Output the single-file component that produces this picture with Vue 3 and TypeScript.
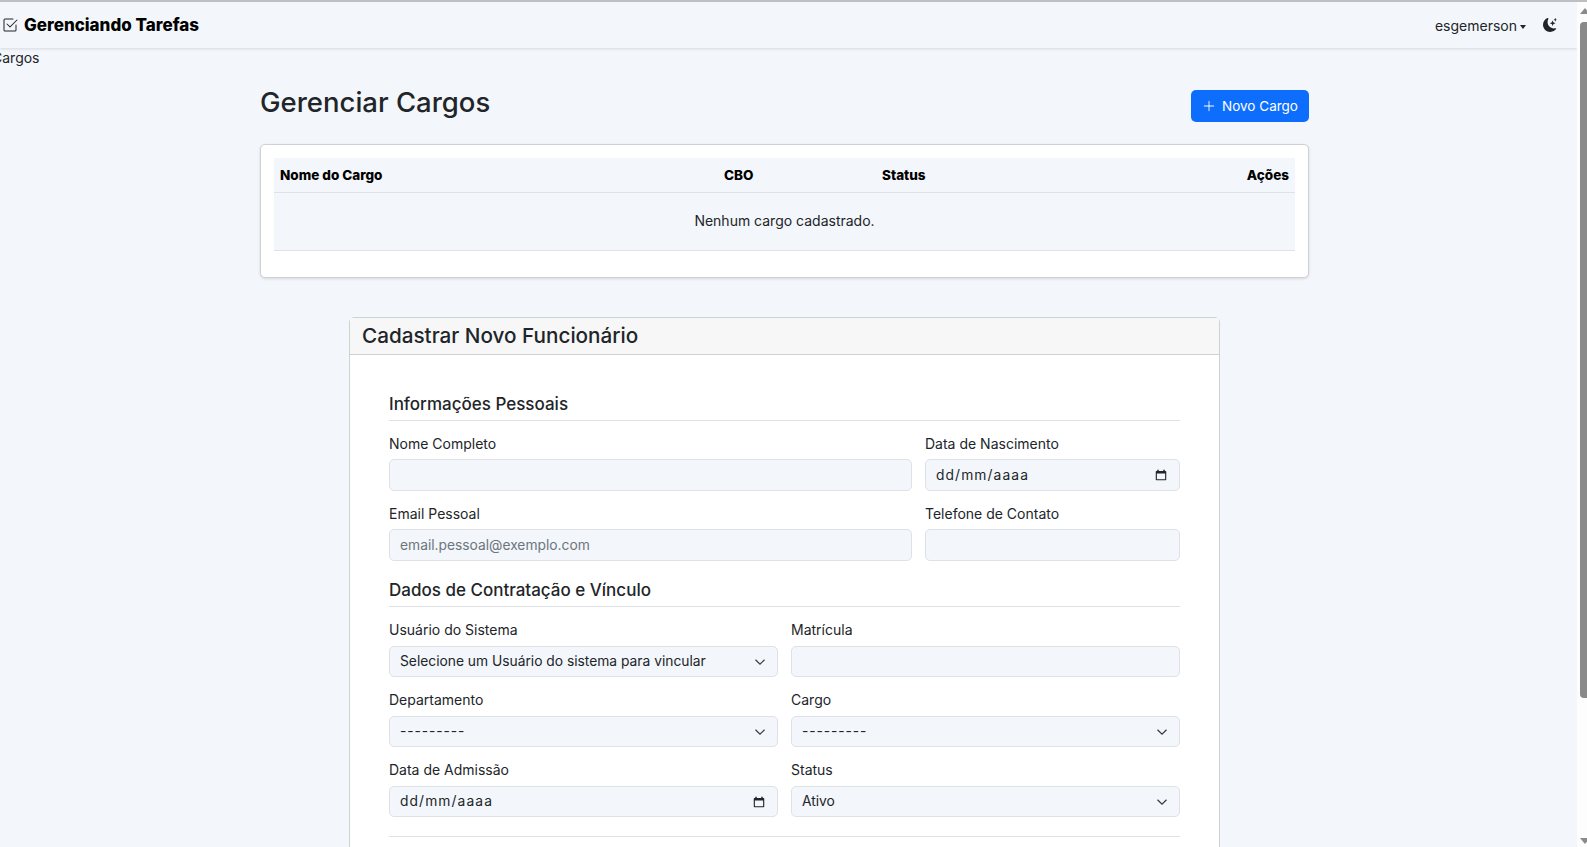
<script setup lang="ts">
import { ref } from 'vue'

const dateMask = ref('dd/mm/aaaa')
</script>

<template>
  <div class="shell">
    <nav class="navbar">
      <div class="brand">
        <svg class="brand_icon" viewBox="0 0 16 16" fill="currentColor">
          <path d="M3 14.500A1.500 1.500 0 0 1 1.500 13V3A1.500 1.500 0 0 1 3 1.500h8a.5.5 0 0 1 0 1H3a.5.5 0 0 0-.5.5v10a.5.5 0 0 0 .5.5h10a.5.5 0 0 0 .5-.5V8a.5.5 0 0 1 1 0v5a1.500 1.500 0 0 1-1.500 1.500H3z" />
          <path d="m8.354 10.354 7-7a.5.5 0 0 0-.708-.708L8 9.293 5.354 6.646a.5.5 0 1 0-.708.708l3 3a.5.5 0 0 0 .708 0z" />
        </svg>
        <span>Gerenciando Tarefas</span>
      </div>
      <div class="nav_right">
        <span class="user">esgemerson<i class="caret"></i></span>
        <svg class="moon" viewBox="0 0 16 16" fill="currentColor">
          <path d="M6 .278a.768.768 0 0 1 .08.858 7.208 7.208 0 0 0-.878 3.46c0 4.021 3.278 7.277 7.318 7.277.527 0 1.04-.055 1.533-.16a.787.787 0 0 1 .81.316.733.733 0 0 1-.031.893A8.349 8.349 0 0 1 8.344 16C3.734 16 0 12.286 0 7.71 0 4.266 2.114 1.312 5.124.06A.752.752 0 0 1 6 .278z" />
          <path d="M10.794 3.148a.217.217 0 0 1 .412 0l.387 1.162c.173.518.579.924 1.097 1.097l1.162.387a.217.217 0 0 1 0 .412l-1.162.387a1.734 1.734 0 0 0-1.097 1.097l-.387 1.162a.217.217 0 0 1-.412 0l-.387-1.162A1.734 1.734 0 0 0 9.31 6.593l-1.162-.387a.217.217 0 0 1 0-.412l1.162-.387a1.734 1.734 0 0 0 1.097-1.097l.387-1.162zM13.863.099a.145.145 0 0 1 .274 0l.258.774c.115.346.386.617.732.732l.774.258a.145.145 0 0 1 0 .274l-.774.258a1.156 1.156 0 0 0-.732.732l-.258.774a.145.145 0 0 1-.274 0l-.258-.774a1.156 1.156 0 0 0-.732-.732l-.774-.258a.145.145 0 0 1 0-.274l.774-.258c.346-.115.617-.386.732-.732L13.863.1z" />
        </svg>
      </div>
    </nav>

    <div class="page_body">
      <div class="crumb">Cargos</div>

      <main class="container">
        <header class="page_head">
          <h1>Gerenciar Cargos</h1>
          <button class="btn_new">
            <svg viewBox="0 0 16 16" fill="currentColor"><path d="M8 2a.5.5 0 0 1 .5.5v5h5a.5.5 0 0 1 0 1h-5v5a.5.5 0 0 1-1 0v-5h-5a.5.5 0 0 1 0-1h5v-5A.5.5 0 0 1 8 2z" /></svg>
            Novo Cargo
          </button>
        </header>

        <section class="table_card">
          <div class="table_head">
            <span class="c_name">Nome do Cargo</span>
            <span class="c_cbo">CBO</span>
            <span class="c_status">Status</span>
            <span class="c_actions">Ações</span>
          </div>
          <div class="table_empty">Nenhum cargo cadastrado.</div>
        </section>

        <section class="form_card">
          <div class="form_title">Cadastrar Novo Funcionário</div>
          <div class="form_body">
            <h2>Informações Pessoais</h2>
            <div class="row row_8_4">
              <label>Nome Completo<span class="input"></span></label>
              <label>Data de Nascimento
                <span class="input"><span class="date">{{ dateMask }}</span><svg class="cal" viewBox="0 0 16 16"><path d="M3 1h2v1.5h6V1h2v1.5h1a1 1 0 0 1 1 1V14a1 1 0 0 1-1 1H2a1 1 0 0 1-1-1V3.500a1 1 0 0 1 1-1h1zM2.500 6v7.500h11V6z" fill-rule="evenodd" /></svg></span>
              </label>
            </div>
            <div class="row row_8_4">
              <label>Email Pessoal<span class="input placeholder">email.pessoal@exemplo.com</span></label>
              <label>Telefone de Contato<span class="input"></span></label>
            </div>

            <h2 class="second">Dados de Contratação e Vínculo</h2>
            <div class="row row_6_6">
              <label>Usuário do Sistema
                <span class="input select"><span>Selecione um Usuário do sistema para vincular</span><svg class="chev" viewBox="0 0 16 16"><path d="m2 5 6 6 6-6" /></svg></span>
              </label>
              <label>Matrícula<span class="input"></span></label>
            </div>
            <div class="row row_6_6">
              <label>Departamento
                <span class="input select"><span class="dashes">---------</span><svg class="chev" viewBox="0 0 16 16"><path d="m2 5 6 6 6-6" /></svg></span>
              </label>
              <label>Cargo
                <span class="input select"><span class="dashes">---------</span><svg class="chev" viewBox="0 0 16 16"><path d="m2 5 6 6 6-6" /></svg></span>
              </label>
            </div>
            <div class="row row_6_6">
              <label>Data de Admissão
                <span class="input"><span class="date">{{ dateMask }}</span><svg class="cal" viewBox="0 0 16 16"><path d="M3 1h2v1.5h6V1h2v1.5h1a1 1 0 0 1 1 1V14a1 1 0 0 1-1 1H2a1 1 0 0 1-1-1V3.500a1 1 0 0 1 1-1h1zM2.500 6v7.500h11V6z" fill-rule="evenodd" /></svg></span>
              </label>
              <label>Status
                <span class="input select"><span>Ativo</span><svg class="chev" viewBox="0 0 16 16"><path d="m2 5 6 6 6-6" /></svg></span>
              </label>
            </div>
            <hr />
          </div>
        </section>
      </main>
    </div>

    <div class="scrollbar"><i class="arrow"></i><i class="thumb"></i><i class="arrow_down"></i></div>
  </div>
</template>

<style>
html, body { margin: 0; height: 100%; overflow: hidden; background: #f3f6fa; }
</style>

<style scoped>
.shell {
  height: 847px;
  overflow: hidden;
  box-sizing: border-box;
  border-top: 2px solid #bdbfc3;
  padding-right: 10px;
  font-family: "Inter", "Liberation Sans", sans-serif;
  font-size: 14px;
  color: #212529;
  background: #f3f6fa;
}

.navbar {
  height: 46px;
  display: flex;
  align-items: center;
  justify-content: space-between;
  padding: 0 20px 0 2px;
  background: #f3f6fa;
  box-shadow: 0 1px 3px rgba(0,0,0,.12);
  position: relative;
}
.brand { display: flex; align-items: center; gap: 6px; font-size: 17px; font-weight: 800; color: #000; }
.brand_icon { width: 16px; height: 16px; color: #212529; }
.nav_right { display: flex; align-items: center; gap: 17px; }
.caret { display: inline-block; margin-left: 3px; vertical-align: 2px; border-top: 4px solid; border-left: 3.500px solid transparent; border-right: 3.500px solid transparent; }
.moon { width: 14px; height: 14px; color: #212529; }

/* the page is scrolled a little sideways in the reference, so the crumb is cut */
.page_body { margin-left: -8px; }
.crumb { height: 20px; line-height: 19px; }

.container { width: 1049px; margin: 0 auto; }

.page_head { display: flex; justify-content: space-between; align-items: flex-start; height: 76px; padding-top: 18px; box-sizing: border-box; }
h1 { margin: 0; font-size: 27.500px; font-weight: 500; line-height: 32px; }
.btn_new {
  margin-top: 4px;
  height: 32px; width: 118px;
  display: flex; align-items: center; justify-content: center; gap: 6px;
  background: #0d6efd; color: #fff; border: 0; border-radius: 5px;
  font: inherit; font-size: 13.500px;
}
.btn_new svg { width: 14px; height: 14px; }

.table_card {
  height: 134px; box-sizing: border-box;
  padding: 13px;
  background: #fff; border: 1px solid #ced1d6; border-radius: 5px;
  box-shadow: 0 1px 3px rgba(0,0,0,.12);
}
.table_head {
  height: 35px; box-sizing: border-box; display: grid;
  grid-template-columns: 444px 158px 1fr auto;
  align-items: center; padding: 0 6px;
  background: #f3f6fa; border-bottom: 1px solid #dee2e6;
  font-size: 13.500px; font-weight: 800; color: #000;
}
.table_empty {
  height: 58px; line-height: 56px; text-align: center; box-sizing: border-box;
  background: #f3f6fa; border-bottom: 1px solid #dee2e6;
}

.form_card {
  width: 871px; box-sizing: border-box; margin: 39px auto 0;
  background: #fff; border: 1px solid #ced1d6; border-radius: 5px 5px 0 0;
}
.form_title { height: 36px; line-height: 35px; padding: 0 12px; font-size: 20.700px; font-weight: 500; background: #f7f7f7; border-bottom: 1px solid #ced1d6; }
.form_body { padding: 38px 39px 40px; }
h2 { margin: 0; font-size: 17px; font-weight: 500; line-height: 22px; padding-bottom: 5px; border-bottom: 1px solid #dee2e6; }
h2.second { margin-top: 18px; }
.row { display: grid; column-gap: 13px; margin-top: 13px; }
.row_8_4 { grid-template-columns: 523px 1fr; }
.row_6_6 { grid-template-columns: 1fr 1fr; }
label { display: block; line-height: 19px; }
.input {
  display: flex; align-items: center; justify-content: space-between;
  height: 31px; box-sizing: border-box; margin-top: 7px; padding: 0 10px;
  background: #f3f6fa; border: 1px solid #dee2e6; border-radius: 5px;
  font-size: 13.800px;
}
.row_8_4 .input { height: 32px; margin-top: 6px; }
.placeholder { color: #6c757d; }
.date { letter-spacing: 1.100px; }
.dashes { letter-spacing: .9px; }
.cal { width: 12px; height: 12px; fill: #212529; margin-right: 2px; }
.chev { width: 12px; height: 12px; fill: none; stroke: #343a40; stroke-width: 1.600; margin-right: 1px; }
hr { margin: 19px 0 0; border: 0; border-top: 1px solid #dee2e6; }

.scrollbar { position: fixed; top: 2px; right: 0; width: 10px; bottom: 0; background: #fdfdfd; overflow: hidden; }
.arrow { position: absolute; top: 6px; left: 3px; border-bottom: 6px solid #8a8a8a; border-left: 5px solid transparent; border-right: 5px solid transparent; }
.thumb { position: absolute; top: 20px; left: 3px; width: 7px; height: 676px; background: #8a8a8a; border-radius: 4px 0 0 4px; }
.arrow_down { position: absolute; bottom: 3px; left: 3px; border-top: 6px solid #8a8a8a; border-left: 5px solid transparent; border-right: 5px solid transparent; }
</style>
